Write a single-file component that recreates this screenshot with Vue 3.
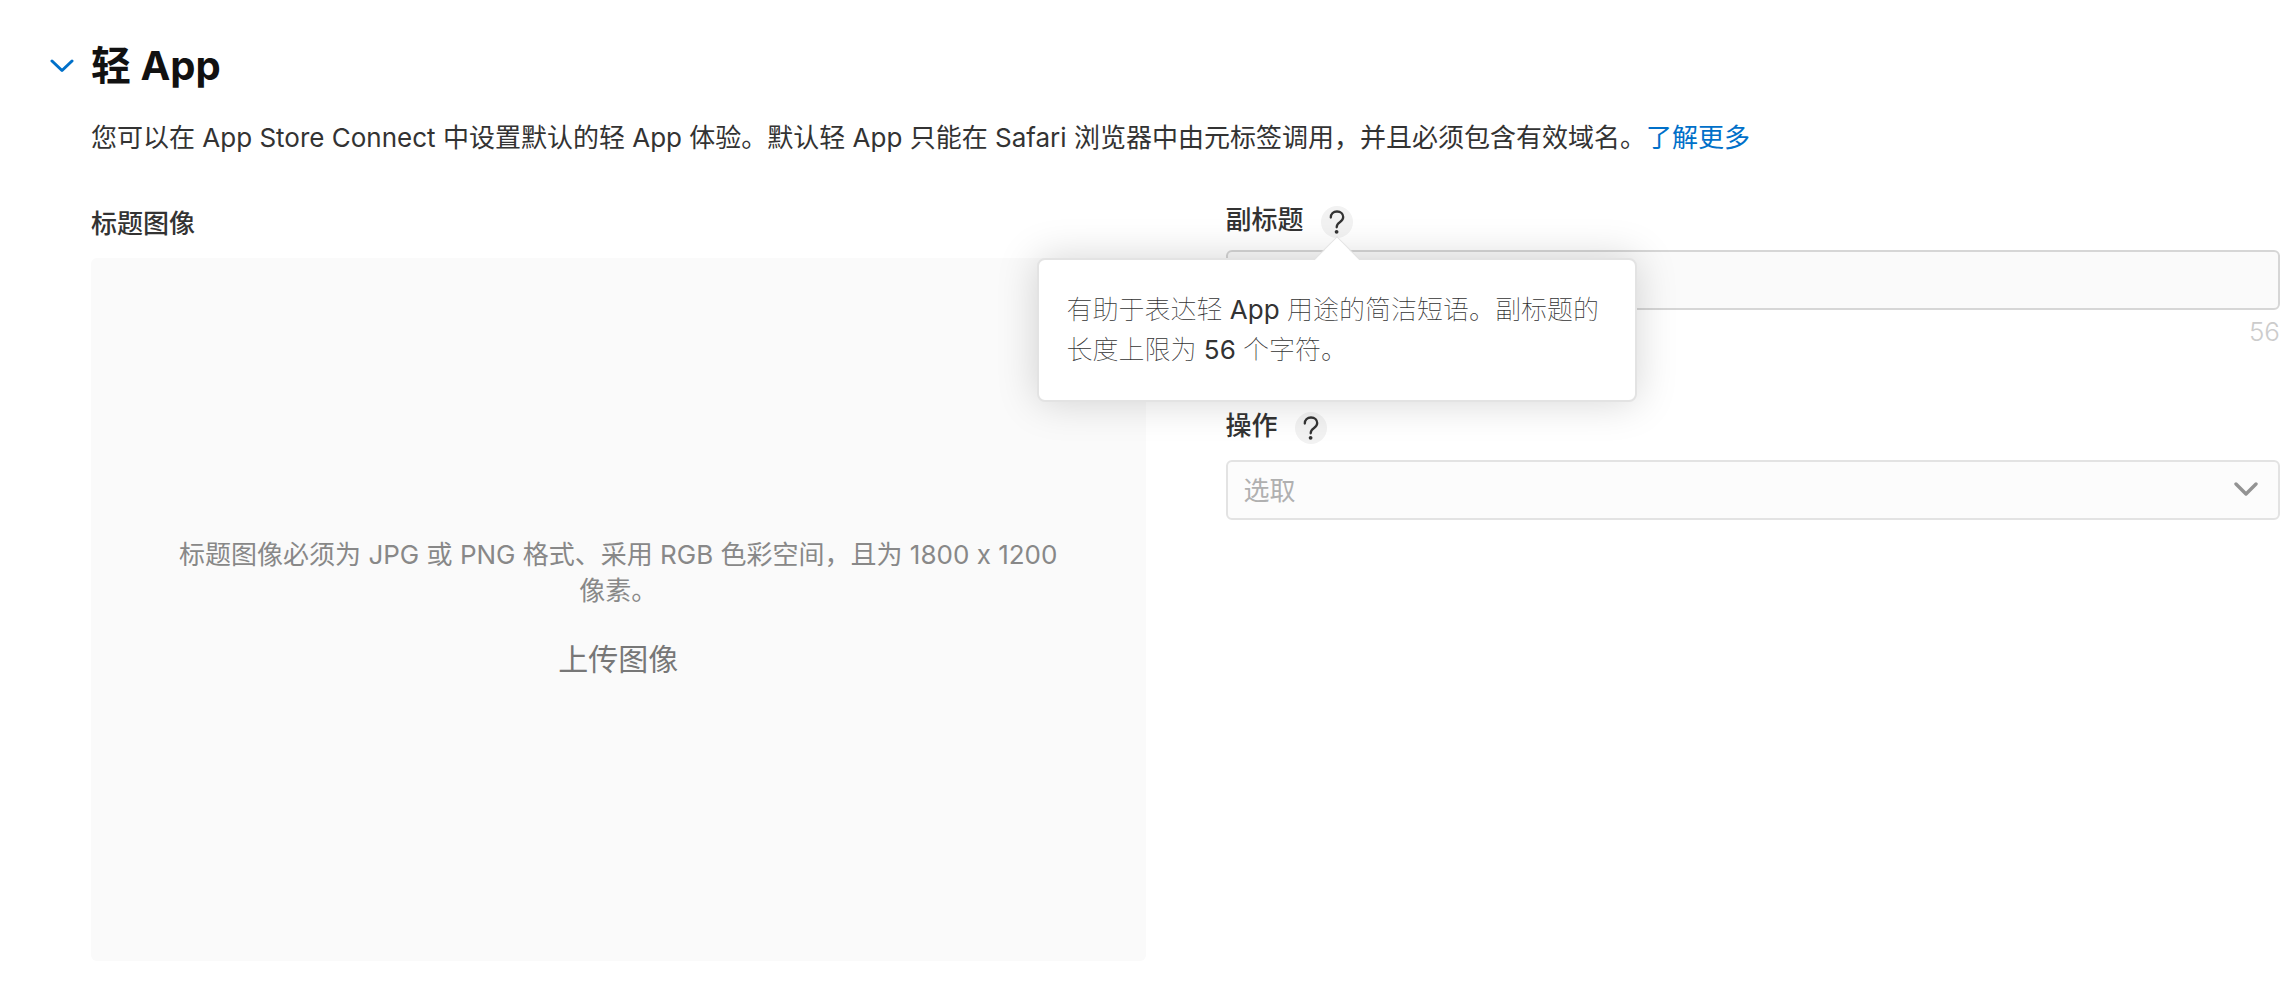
<script setup>
import { ref } from 'vue'

const subtitle = ref('')
const action = ref('')
const limit = 56
</script>

<template>
  <main class="section">
    <header class="heading">
      <button class="toggle" type="button" aria-label="轻 App" aria-expanded="true">
        <svg width="24" height="14" viewBox="0 0 24 14" fill="none" stroke="#0070c9" stroke-width="3" stroke-linecap="round" stroke-linejoin="round">
          <path d="M2 2 L12 11.5 L22 2" />
        </svg>
      </button>
      <h1>轻 App</h1>
    </header>

    <p class="intro">您可以在 App Store Connect 中设置默认的轻 App 体验。默认轻 App 只能在 Safari 浏览器中由元标签调用，并且必须包含有效域名。<a href="#">了解更多</a></p>

    <div class="columns">
      <section class="column">
        <h2 class="label image-label">标题图像</h2>
        <div class="dropzone">
          <p>标题图像必须为 JPG 或 PNG 格式、采用 RGB 色彩空间，且为 1800 x 1200 像素。</p>
          <button type="button" class="upload">上传图像</button>
        </div>
      </section>

      <section class="column">
        <div class="field-head">
          <label class="label" for="subtitle">副标题</label>
          <div class="help-wrap">
            <button class="help" type="button" aria-describedby="subtitle-tip" aria-label="副标题">
              <svg width="32" height="32" viewBox="0 0 32 32" fill="none">
                <path d="M9.8 11.6 C9.8 7.8 12.4 5.5 16 5.5 C19.7 5.5 22.2 7.9 22.2 11 C22.2 13.4 21 14.8 18.8 16.2 C16.6 17.6 15.7 18.6 15.7 21.3" stroke="#333" stroke-width="2.3" stroke-linecap="round" />
                <circle cx="15.6" cy="25.8" r="1.9" fill="#333" />
              </svg>
            </button>
            <div id="subtitle-tip" class="tooltip" role="tooltip">有助于表达轻 <span>App</span> 用途的简洁短语。副标题的长度上限为 <span>56</span> 个字符。</div>
          </div>
        </div>
        <input id="subtitle" v-model="subtitle" class="control" type="text" :maxlength="limit" />
        <div class="counter">{{ limit - subtitle.length }}</div>

        <div class="field-head">
          <label class="label" for="action">操作</label>
          <div class="help-wrap">
            <button class="help" type="button" aria-label="操作">
              <svg width="32" height="32" viewBox="0 0 32 32" fill="none">
                <path d="M9.8 11.6 C9.8 7.8 12.4 5.5 16 5.5 C19.7 5.5 22.2 7.9 22.2 11 C22.2 13.4 21 14.8 18.8 16.2 C16.6 17.6 15.7 18.6 15.7 21.3" stroke="#333" stroke-width="2.3" stroke-linecap="round" />
                <circle cx="15.6" cy="25.8" r="1.9" fill="#333" />
              </svg>
            </button>
          </div>
        </div>
        <div class="select-wrap">
          <select id="action" v-model="action" class="control select">
            <option value="">选取</option>
          </select>
          <svg class="caret" width="24" height="14" viewBox="0 0 24 14" fill="none" stroke="#939393" stroke-width="3.4" stroke-linecap="round" stroke-linejoin="round">
            <path d="M2 2 L12 12 L22 2" />
          </svg>
        </div>
      </section>
    </div>
  </main>
</template>

<style>
body {
  background: #fff;
}
</style>

<style scoped>
.section {
  box-sizing: border-box;
  padding: 40px 16px 40px 50px;
  color: #333;
  font-family: Inter, "Noto Sans CJK SC", sans-serif;
  font-size: 26px;
  line-height: 36px;
}
h1, h2, p {
  margin: 0;
}
button {
  padding: 0;
  border: 0;
  background: none;
  font: inherit;
  color: inherit;
}
.heading {
  display: flex;
  align-items: center;
}
.toggle {
  display: flex;
  width: 41px;
}
h1 {
  color: #111;
  font-size: 40px;
  line-height: 52px;
  font-weight: 700;
}
.intro {
  margin: 28px 0 0 41px;
}
a {
  color: #0070c9;
  text-decoration: none;
}
.columns {
  display: grid;
  grid-template-columns: 1fr 1fr;
  gap: 80px;
  margin: 44px 0 0 41px;
}
.column {
  min-width: 0;
}
.label {
  padding-top: 2px;
  font-size: 26px;
  line-height: 36px;
  font-weight: 500;
}
.image-label {
  padding: 6px 0 16px;
}
.dropzone {
  box-sizing: border-box;
  display: flex;
  flex-direction: column;
  align-items: center;
  justify-content: center;
  gap: 30px;
  aspect-ratio: 3 / 2;
  padding: 0 80px 4px;
  border-radius: 6px;
  background: #fafafa;
  color: #888;
  text-align: center;
}
.upload {
  color: #777;
  font-size: 30px;
  line-height: 40px;
}
.field-head {
  display: flex;
  gap: 17px;
  height: 50px;
}
.help-wrap {
  position: relative;
  padding-top: 6px;
}
.help {
  display: flex;
  width: 32px;
  height: 32px;
  border-radius: 50%;
  background: #f2f2f2;
}
.tooltip {
  position: absolute;
  z-index: 2;
  top: 58px;
  left: 50%;
  box-sizing: border-box;
  width: 600px;
  height: 144px;
  padding: 30px 28px;
  border: 2px solid #e3e3e3;
  border-radius: 8px;
  background: #fff;
  box-shadow: 0 0 40px rgba(0, 0, 0, 0.17);
  font-weight: 100;
  line-height: 40px;
  transform: translateX(-50%);
}
.tooltip::before {
  content: "";
  position: absolute;
  top: -17px;
  left: 50%;
  width: 32px;
  height: 32px;
  border: 1px solid #e3e3e3;
  border-right: 0;
  border-bottom: 0;
  background: linear-gradient(135deg, #fff 50%, transparent 50%);
  transform: translateX(-50%) rotate(45deg);
}
.tooltip span {
  font-weight: 400;
}
.control {
  box-sizing: border-box;
  display: block;
  width: 100%;
  height: 60px;
  padding: 0 16px;
  border: 2px solid #d6d6d6;
  border-radius: 6px;
  outline: 0;
  background: #fafafa;
  font: inherit;
  color: inherit;
}
.counter {
  margin: 4px 0 56px;
  color: #ccc;
  font-weight: 300;
  text-align: right;
}
.select-wrap {
  position: relative;
  margin-top: 4px;
}
.select {
  appearance: none;
  padding-top: 2px;
  border-color: #e3e3e3;
  background: #fcfcfc;
  color: #b0b0b0;
}
.caret {
  position: absolute;
  top: 22px;
  right: 22px;
  pointer-events: none;
}
</style>
